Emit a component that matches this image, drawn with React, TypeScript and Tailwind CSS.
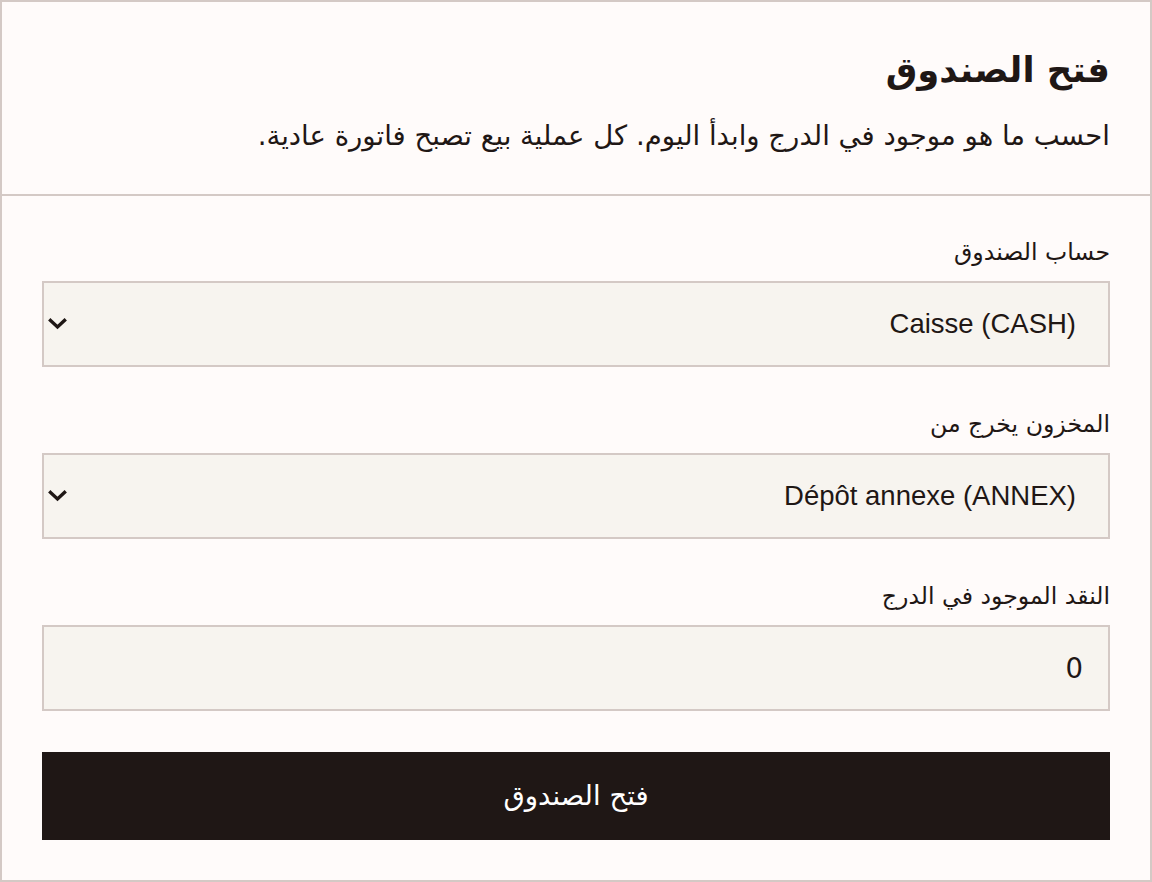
import { useState } from 'react';

const arabic = "font-['DejaVu_Sans',sans-serif]";
const latin = "font-['Liberation_Sans',Arial,sans-serif]";

function Chevron() {
  return (
    <svg
      className="pointer-events-none absolute left-[6px] top-1/2 -translate-y-1/2"
      width="19"
      height="12"
      viewBox="0 0 19 12"
      fill="none"
    >
      <polyline points="2.5,2.5 9.5,9 16.5,2.5" stroke="#1f1715" strokeWidth="3.4" strokeLinecap="square" />
    </svg>
  );
}

interface FieldProps {
  label: string;
  children: React.ReactNode;
}

function Field({ label, children }: FieldProps) {
  return (
    <div className="flex flex-col">
      <label className="mb-[13px] text-[23.6px] leading-[32px] text-[#1f1715]">{label}</label>
      {children}
    </div>
  );
}

export default function App() {
  const [account, setAccount] = useState('CASH');
  const [store, setStore] = useState('ANNEX');
  const [cash, setCash] = useState('0');

  return (
    <div
      dir="rtl"
      className={`h-[882px] w-full border-2 border-[#d4c9c5] bg-[#fffbfa] text-[#1f1715] ${arabic}`}
    >
      <div className="border-b-2 border-[#d4c9c5] px-10 pt-[46px] pb-[39px]">
        <h1 className="text-[35.4px] font-bold leading-[44px]">فتح الصندوق</h1>
        <p className="mt-[23px] text-[27.5px] leading-[40px]">
          احسب ما هو موجود في الدرج وابدأ اليوم. كل عملية بيع تصبح فاتورة عادية.
        </p>
      </div>

      <div className="flex flex-col gap-[41px] px-10 pt-[40px] pb-10">
        <Field label="حساب الصندوق">
          <div className="relative">
            <select
              value={account}
              onChange={(e) => setAccount(e.target.value)}
              className={`h-[86px] w-full appearance-none border-2 border-[#d4c9c5] bg-[#f7f4ef] pr-[32px] pl-12 text-[27.5px] text-[#1f1715] outline-none ${latin}`}
            >
              <option value="CASH">Caisse (CASH)</option>
            </select>
            <Chevron />
          </div>
        </Field>

        <Field label="المخزون يخرج من">
          <div className="relative">
            <select
              value={store}
              onChange={(e) => setStore(e.target.value)}
              className={`h-[86px] w-full appearance-none border-2 border-[#d4c9c5] bg-[#f7f4ef] pr-[32px] pl-12 text-[27.5px] text-[#1f1715] outline-none ${latin}`}
            >
              <option value="ANNEX">Dépôt annexe (ANNEX)</option>
            </select>
            <Chevron />
          </div>
        </Field>

        <Field label="النقد الموجود في الدرج">
          <input
            value={cash}
            onChange={(e) => setCash(e.target.value)}
            className="h-[86px] w-full border-2 border-[#d4c9c5] bg-[#f7f4ef] px-[25px] text-[27.5px] text-[#1f1715] outline-none"
          />
        </Field>

        <button className="h-[88px] w-full bg-[#1f1715] text-[27.5px] text-white">فتح الصندوق</button>
      </div>
    </div>
  );
}
